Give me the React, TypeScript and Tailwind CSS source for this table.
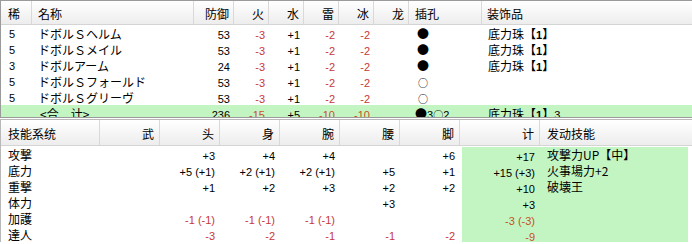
import React from 'react';

type ArmorRow = {
  rare: string;
  name: string;
  def: string;
  res: string[];
  slot: string;
  deco: string;
};

type SkillRow = {
  name: string;
  parts: string[];
  total: string;
  active: string;
};

const armor: ArmorRow[] = [
  { rare: '5', name: 'ドボルＳヘルム', def: '53', res: ['-3', '+1', '-2', '-2', ''], slot: '●', deco: '底力珠' },
  { rare: '5', name: 'ドボルＳメイル', def: '53', res: ['-3', '+1', '-2', '-2', ''], slot: '●', deco: '底力珠' },
  { rare: '3', name: 'ドボルアーム', def: '24', res: ['-3', '+1', '-2', '-2', ''], slot: '●', deco: '底力珠' },
  { rare: '5', name: 'ドボルＳフォールド', def: '53', res: ['-3', '+1', '-2', '-2', ''], slot: '○', deco: '' },
  { rare: '5', name: 'ドボルＳグリーヴ', def: '53', res: ['-3', '+1', '-2', '-2', ''], slot: '○', deco: '' },
];

const skills: SkillRow[] = [
  { name: '攻撃', parts: ['', '+3', '+4', '+4', '', '+6'], total: '+17', active: '攻撃力UP【中】' },
  { name: '底力', parts: ['', '+5 (+1)', '+2 (+1)', '+2 (+1)', '+5', '+1'], total: '+15 (+3)', active: '火事場力+2' },
  { name: '重撃', parts: ['', '+1', '+2', '+3', '+2', '+2'], total: '+10', active: '破壊王' },
  { name: '体力', parts: ['', '', '', '', '+3', ''], total: '+3', active: '' },
  { name: '加護', parts: ['', '-1 (-1)', '-1 (-1)', '-1 (-1)', '', ''], total: '-3 (-3)', active: '' },
  { name: '達人', parts: ['', '-3', '-2', '-1', '-1', '-2'], total: '-9', active: '' },
];

const cjk = "font-['Noto_Sans_CJK_JP','Noto_Sans_CJK_SC',sans-serif] text-[12px]";
const num = "font-['Liberation_Sans',sans-serif] text-[11px]";
const headCell = 'h-full flex items-center border-r border-[#d9d9d9]';

const Num = ({ v, green }: { v: string; green?: boolean }) => {
  const neg = v.startsWith('-');
  const color = neg ? (green ? 'text-[#c8501e]' : 'text-[#c83838]') : 'text-black';
  return <span className={`${num} ${color}`}>{v}</span>;
};

// decoration name followed by its slot size in brackets
const Deco = ({ name, count }: { name: string; count?: string }) => (
  <>
    {name}【<span className="font-['Liberation_Sans',sans-serif] text-[11px] font-bold">1</span>】
    {count && <span className={num}>{count}</span>}
  </>
);

const ArmorTable: React.FC = () => (
  <div className="h-[118px] overflow-hidden border-t border-b border-l border-[#9a9a9a]">
    <div className={`grid grid-cols-[31px_162px_40px_35px_35px_35px_35px_35px_73px_1fr] h-[24px] border-b border-[#d4d4d4] bg-linear-to-b from-white to-[#ededed] ${cjk} text-black`}>
      <div className={`${headCell} pl-[7px] pt-[2px]`}>稀</div>
      <div className={`${headCell} pl-[6px] pt-[2px]`}>名称</div>
      <div className={`${headCell} justify-end pr-1 pt-[2px]`}>防御</div>
      <div className={`${headCell} justify-end pr-1 pt-[2px]`}>火</div>
      <div className={`${headCell} justify-end pr-1 pt-[2px]`}>水</div>
      <div className={`${headCell} justify-end pr-1 pt-[2px]`}>雷</div>
      <div className={`${headCell} justify-end pr-1 pt-[2px]`}>冰</div>
      <div className={`${headCell} justify-end pr-1 pt-[2px]`}>龙</div>
      <div className={`${headCell} pl-[6px] pt-[2px]`}>插孔</div>
      <div className="h-full flex items-center pl-[5px] pt-[2px]">装饰品</div>
    </div>

    {armor.map((row) => (
      <div key={row.name} className="grid grid-cols-[31px_162px_40px_35px_35px_35px_35px_35px_73px_1fr] h-4 leading-4 items-center">
        <div className={`${num} pl-[8px] text-black`}>{row.rare}</div>
        <div className={`${cjk} pl-[6px] text-black`}>{row.name}</div>
        <div className="text-right pr-1"><Num v={row.def} /></div>
        {row.res.map((r, i) => (
          <div key={i} className="text-right pr-1"><Num v={r} /></div>
        ))}
        <div className={`${cjk} pl-[8px] text-black`}>
          {row.slot === '●' ? row.slot : <span className="text-[10px] pl-px">{row.slot}</span>}
        </div>
        <div className={`${cjk} pl-[6px] text-black`}>{row.deco && <Deco name={row.deco} />}</div>
      </div>
    ))}

    {/* running total row */}
    <div className="grid grid-cols-[31px_162px_40px_35px_35px_35px_35px_35px_73px_1fr] h-4 leading-4 items-center bg-[#c3f5c3]">
      <div />
      <div className={`${cjk} pl-[8px] text-black`}>&lt;合　计&gt;</div>
      <div className="text-right pr-1"><Num v="236" /></div>
      <div className="text-right pr-1"><Num v="-15" green /></div>
      <div className="text-right pr-1"><Num v="+5" green /></div>
      <div className="text-right pr-1"><Num v="-10" green /></div>
      <div className="text-right pr-1"><Num v="-10" green /></div>
      <div />
      <div className={`${cjk} pl-[6px] text-black`}>●<span className={num}>3</span><span className="text-[10px]">○</span><span className={num}>2</span></div>
      <div className={`${cjk} pl-[6px] text-black`}><Deco name="底力珠" count="3" /></div>
    </div>
  </div>
);

const SkillTable: React.FC = () => (
  <div className="h-[123px] overflow-hidden border-t border-l border-[#b8b8b8]">
    <div className={`grid grid-cols-[99px_60px_60px_60px_60px_60px_60px_80px_148px_1fr] h-[26px] border-b border-[#d4d4d4] bg-linear-to-b from-white to-[#ededed] ${cjk} text-black`}>
      <div className={`${headCell} pl-[7px] pt-[2px]`}>技能系统</div>
      <div className={`${headCell} justify-end pr-[5px] pt-[2px]`}>武</div>
      <div className={`${headCell} justify-end pr-[5px] pt-[2px]`}>头</div>
      <div className={`${headCell} justify-end pr-[5px] pt-[2px]`}>身</div>
      <div className={`${headCell} justify-end pr-[5px] pt-[2px]`}>腕</div>
      <div className={`${headCell} justify-end pr-[5px] pt-[2px]`}>腰</div>
      <div className={`${headCell} justify-end pr-[5px] pt-[2px]`}>脚</div>
      <div className={`${headCell} justify-end pr-[5px] pt-[2px]`}>计</div>
      <div className="h-full flex items-center pl-[7px] pt-[2px]">发动技能</div>
    </div>

    {skills.map((row) => (
      <div key={row.name} className="grid grid-cols-[99px_60px_60px_60px_60px_60px_60px_80px_148px_1fr] h-4 leading-4 items-center">
        <div className={`${cjk} pl-[7px] text-black`}>{row.name}</div>
        {row.parts.map((p, i) => (
          <div key={i} className="text-right pr-[5px]"><Num v={p} /></div>
        ))}
        <div className="h-4 text-right pr-[5px] bg-[#c3f5c3] ml-[2px]"><Num v={row.total} green /></div>
        <div className={`${cjk} h-4 pl-[7px] bg-[#c3f5c3] text-black`}>{row.active}</div>
        <div />
      </div>
    ))}
  </div>
);

const App: React.FC = () => {
  return (
    <div className="w-[692px] h-[244px] overflow-hidden bg-white">
      <ArmorTable />
      <div className="h-px bg-white" />
      <SkillTable />
    </div>
  );
};

export default App;
